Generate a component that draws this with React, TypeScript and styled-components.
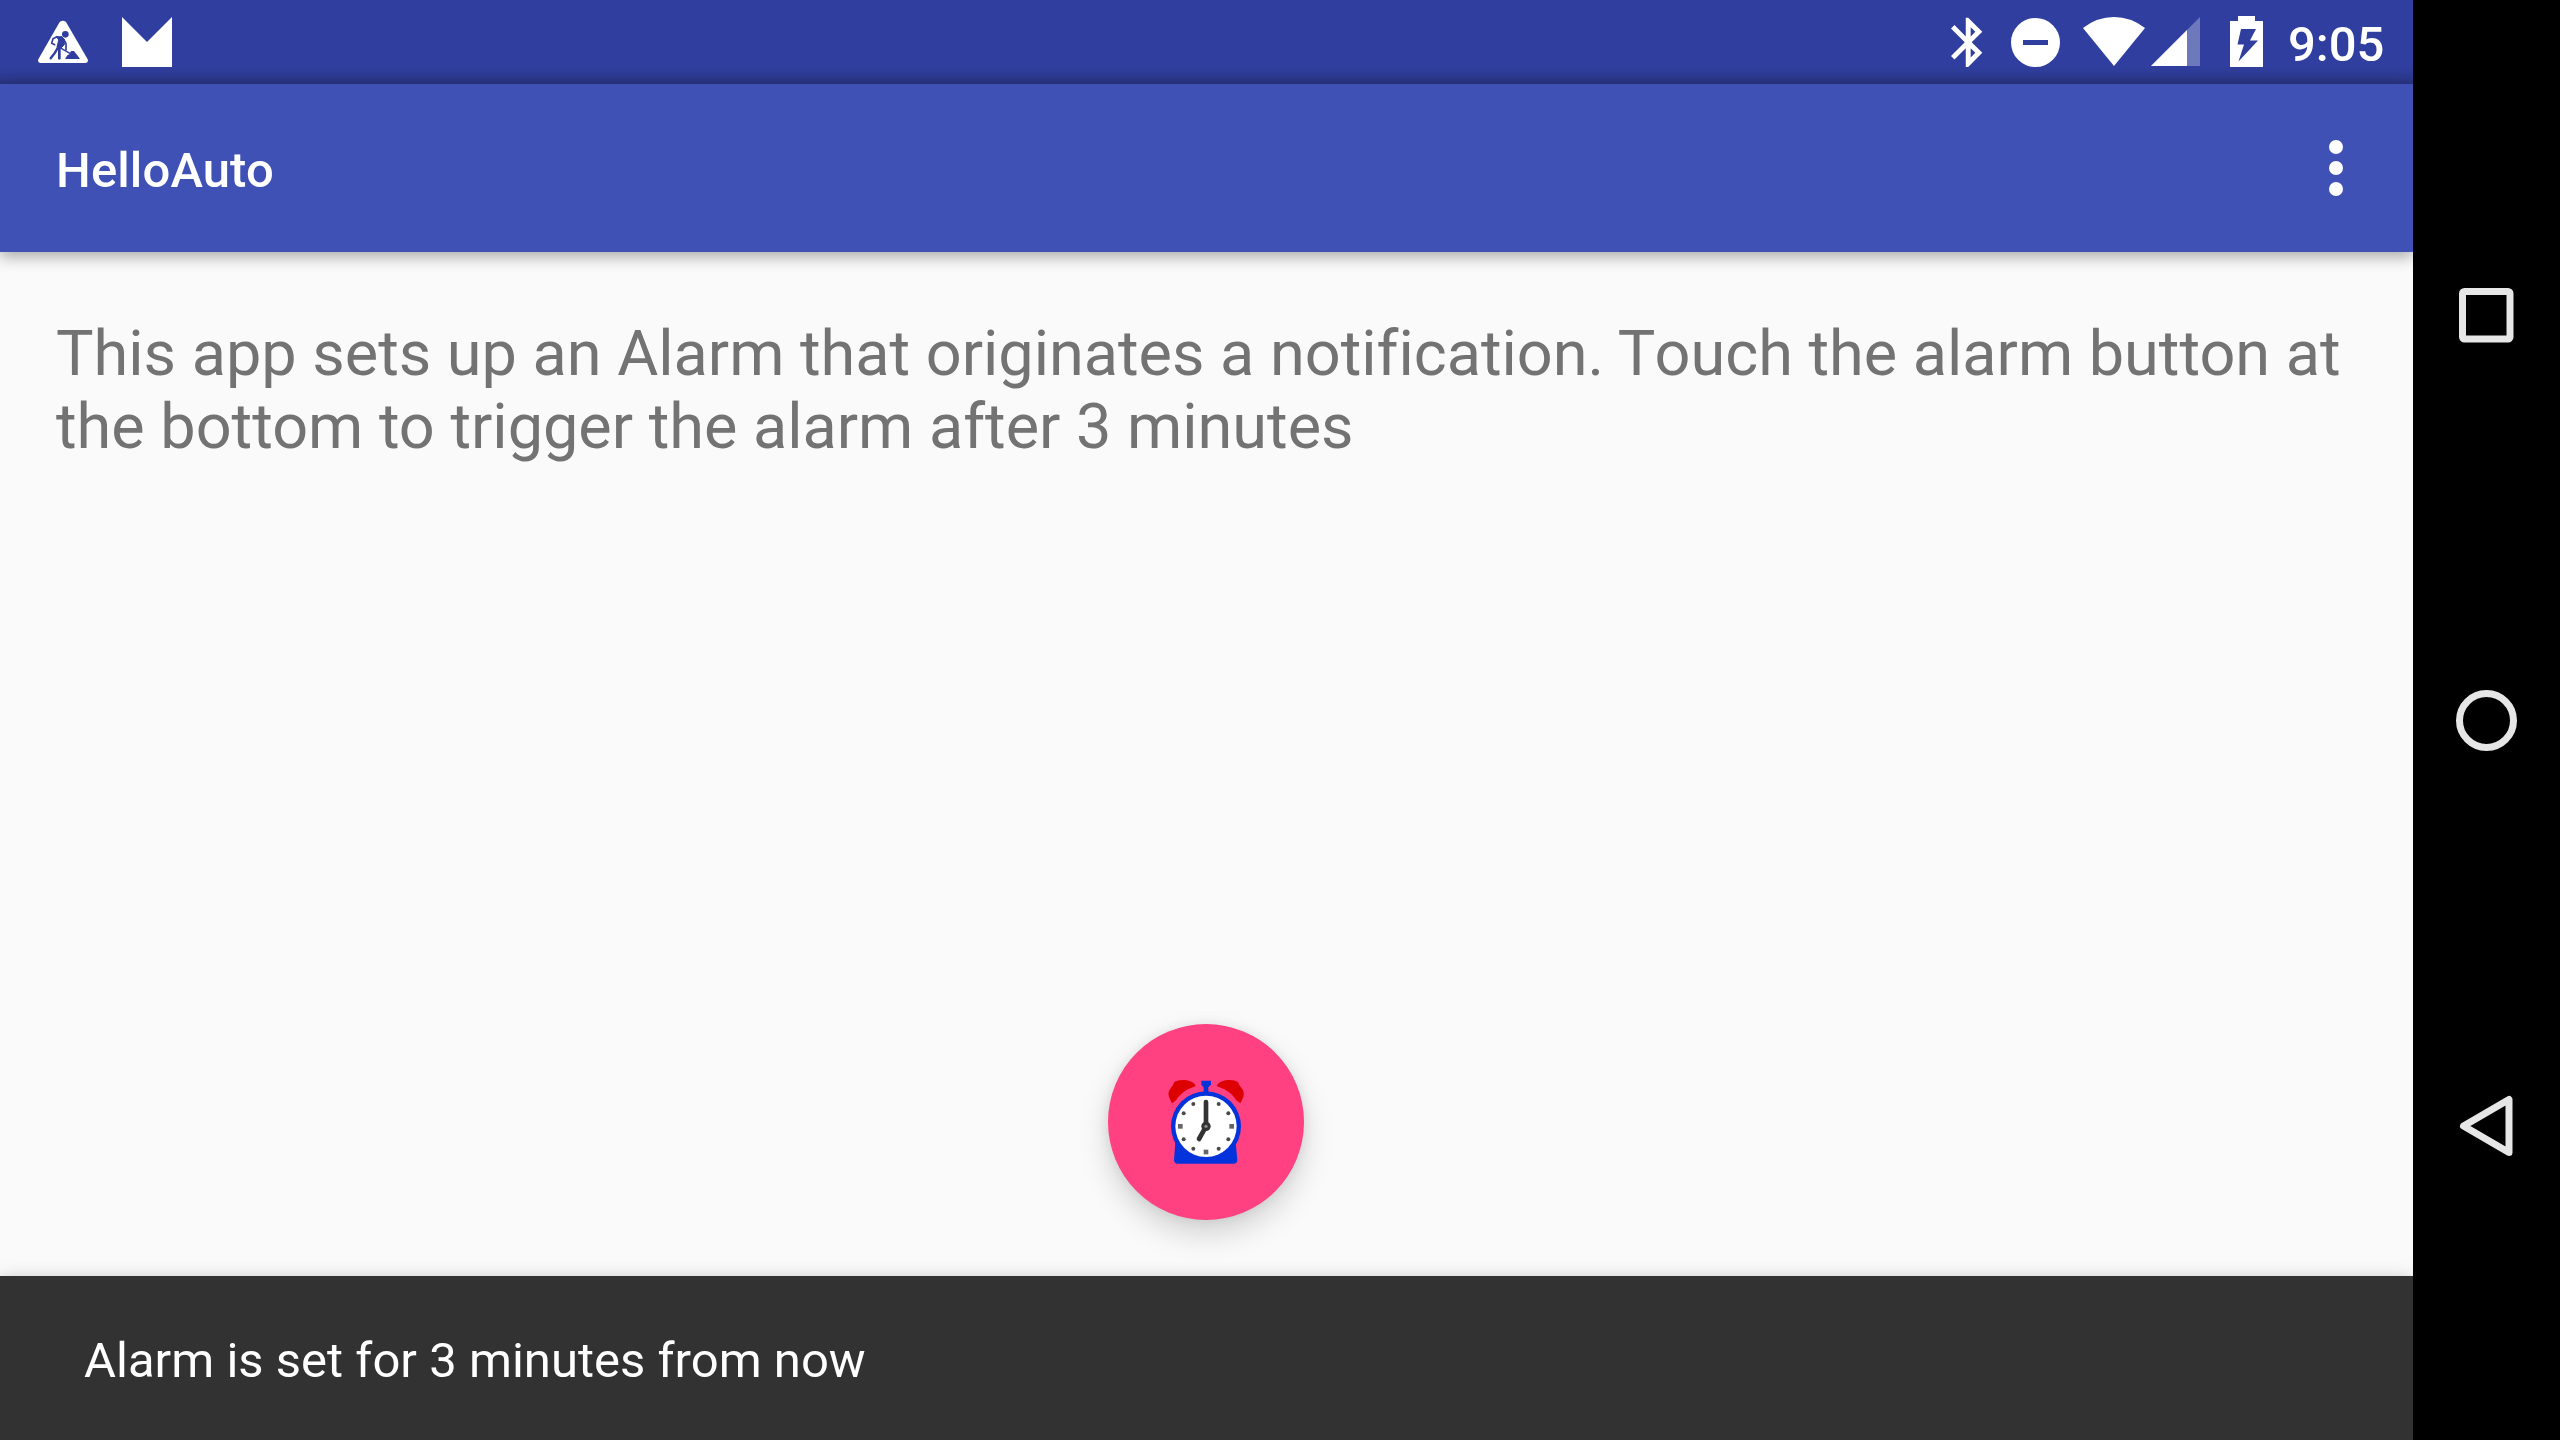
import React from 'react';
import styled, { createGlobalStyle } from 'styled-components';

const GlobalStyle = createGlobalStyle`
  html, body { margin: 0; padding: 0; background: #000; }
  * { box-sizing: border-box; }
`;

const Device = styled.div`
  display: flex;
  width: 2560px;
  height: 1440px;
  overflow: hidden;
  background: #000;
  font-family: Roboto, sans-serif;
`;

const Screen = styled.div`
  display: flex;
  flex-direction: column;
  width: 2413px;
  height: 1440px;
  overflow: hidden;
  background: #fafafa;
`;

const StatusBar = styled.header`
  flex: none;
  display: flex;
  justify-content: space-between;
  height: 84px;
  padding: 0 28px 0 38px;
  color: #fff;
  background: linear-gradient(to bottom, #303f9f 0, #303f9f 66px, #2e3b95 74px, #29347f 84px);
`;

const StatusGroup = styled.div`
  display: flex;
  align-items: flex-start;
`;

const StatusIcon = styled.svg<{ $gap?: number }>`
  flex: none;
  display: block;
  margin-right: ${(p) => p.$gap ?? 0}px;
`;

const Clock = styled.span`
  font-size: 49px;
  font-weight: 500;
  line-height: 57px;
  padding-top: 16px;
  width: 97px;
  white-space: nowrap;
`;

const Toolbar = styled.div`
  flex: none;
  z-index: 1;
  display: flex;
  align-items: center;
  justify-content: space-between;
  height: 168px;
  padding: 0 70px 0 56px;
  color: #fff;
  background: #3f51b5;
  box-shadow: 0 5px 14px rgba(0, 0, 0, 0.32);
`;

const Title = styled.h1`
  margin: 0;
  padding-top: 4px;
  font-size: 49px;
  font-weight: 500;
  line-height: 57px;
  letter-spacing: 0.12px;
`;

const MenuButton = styled.div`
  display: flex;
  flex-direction: column;
  gap: 7px;
`;

const Dot = styled.span`
  width: 14px;
  height: 14px;
  border-radius: 50%;
  background: #fff;
`;

const Content = styled.main`
  flex: 1;
  display: flex;
  flex-direction: column;
  justify-content: space-between;
  align-items: center;
  padding: 65px 57px 56px 56px;
`;

const Message = styled.p`
  margin: 0;
  align-self: flex-start;
  color: #737373;
  font-size: 63px;
  line-height: 73px;
  letter-spacing: -0.015px;
  white-space: nowrap;
`;

const KernedCap = styled.span`
  margin-left: -2px;
  letter-spacing: -0.8px;
`;

const Fab = styled.div`
  width: 196px;
  height: 196px;
  border-radius: 50%;
  background: #ff4081;
  box-shadow: 0 14px 30px rgba(0, 0, 0, 0.16), 0 0 12px rgba(0, 0, 0, 0.08);
`;

const Snackbar = styled.footer`
  flex: none;
  z-index: 1;
  display: flex;
  align-items: center;
  height: 164px;
  padding: 4px 84px 0;
  color: #fff;
  background: #323232;
  box-shadow: 0 3px 16px rgba(0, 0, 0, 0.25);
  font-size: 49px;
  line-height: 57px;
  letter-spacing: 0.02px;
`;

const NavBar = styled.nav`
  display: flex;
  flex-direction: column;
  align-items: center;
  justify-content: space-between;
  width: 147px;
  padding: 279px 0 278px;
`;

const NavIcon = styled.svg`
  display: block;
  fill: none;
  stroke: #e6e6e6;
  stroke-width: 7;
  stroke-linejoin: round;
`;

const ticks = [
  [130, 132], [206, 132], [101, 160], [235, 160],
  [101, 238], [235, 238], [130, 266], [206, 266],
];

const quarters = [[91, 199], [245, 199], [168, 276]];

function AlarmIcon() {
  return (
    <svg width="196" height="196" viewBox="-126 -108 588 588">
      <path d="M66 130 L57 112 Q53 96 61 86 Q70 77 73 66 Q84 60 97 60 Q117 58 133 71 L137 78 L114 88 Q91 100 78 121Z" fill="#dc0000" />
      <path d="M271 130 L280 112 Q284 96 276 86 Q267 77 264 66 Q253 60 240 60 Q220 58 204 71 L200 78 L223 88 Q246 100 259 121Z" fill="#dc0000" />
      <path d="M154 62 H183 V74 L175 82 V100 H161 V82 L154 74Z" fill="#0433dc" />
      <path d="M76 248 H257 L262 300 Q262 311 250 311 H84 Q72 311 72 300Z" fill="#0433dc" />
      <circle cx="168" cy="199" r="105" fill="#0433dc" />
      <circle cx="168" cy="199" r="92" fill="#fff" />
      {ticks.map(([x, y]) => (
        <circle key={`${x}-${y}`} cx={x} cy={y} r="6" fill="#4a4a4a" />
      ))}
      {quarters.map(([x, y]) => (
        <rect key={`${x}-${y}`} x={x - 7} y={y - 7} width="14" height="14" fill="#666" />
      ))}
      <path d="M168 126 V199 L147 237" fill="none" stroke="#333" strokeWidth="14" strokeLinecap="round" />
      <circle cx="168" cy="199" r="14" fill="#333" />
      <circle cx="168" cy="199" r="5" fill="#8a8a8a" />
    </svg>
  );
}

export default function App() {
  return (
    <Device>
      <GlobalStyle />
      <Screen>
        <StatusBar>
          <StatusGroup>
            <StatusIcon $gap={34} width="50" height="84" viewBox="0 0 150 252">
              <path d="M65 66 Q75 58 84 66 L149 178 Q152 188 143 189 H7 Q-2 188 1 178Z" fill="#fff" />
              <g stroke="#303f9f" fill="none" strokeLinecap="round" strokeLinejoin="round">
                <circle cx="82" cy="103" r="10" fill="#303f9f" stroke="none" />
                <path d="M56 110 L72 110 L79 119 L79 134 L67 146 L57 141 L62 121Z" fill="#303f9f" strokeWidth="3" />
                <path d="M57 110 L45 116 L41 130 L50 134" strokeWidth="5" />
                <path d="M60 142 L51 158 L38 175" strokeWidth="7" />
                <path d="M64 144 L64 175" strokeWidth="8" />
                <path d="M77 118 L84 130 L84 149" strokeWidth="5" />
                <path d="M66 143 L97 161" strokeWidth="4" />
              </g>
              <path d="M81 177 L88 166 L94 163 L99 153 H108 L113 160 L117 164 L126 177Z" fill="#303f9f" />
            </StatusIcon>
            <StatusIcon width="50" height="84" viewBox="0 0 50 84">
              <path d="M0 17 L25 42 L50 17 V67 H0Z" fill="#fff" />
            </StatusIcon>
          </StatusGroup>
          <StatusGroup>
            <StatusIcon $gap={28} width="32" height="84" viewBox="0 0 32 84">
              <path transform="translate(-12.3 12.8) scale(2.46)" fill="#fff" d="M17.71 7.71L12 2h-1v7.59L6.41 5 5 6.41 10.59 12 5 17.59 6.41 19 11 14.41V22h1l5.71-5.71-4.3-4.29 4.3-4.29zM13 5.83l1.88 1.88L13 9.59V5.83zm1.88 10.46L13 18.17v-3.76l1.88 1.88z" />
            </StatusIcon>
            <StatusIcon $gap={23} width="49" height="84" viewBox="0 0 49 84">
              <circle cx="24.500" cy="42.500" r="24.500" fill="#fff" />
              <rect x="12" y="40" width="25" height="5" fill="#303f9f" />
            </StatusIcon>
            <StatusIcon $gap={6} width="62" height="84" viewBox="0 0 62 84">
              <path d="M0 28 Q14 17 31 17 Q48 17 62 28 L31 66Z" fill="#fff" />
            </StatusIcon>
            <StatusIcon $gap={30} width="49" height="84" viewBox="0 0 49 84">
              <path d="M0 66 L49 17 V66Z" fill="#fff" fillOpacity="0.3" />
              <path d="M0 66 L36 30 V66Z" fill="#fff" />
            </StatusIcon>
            <StatusIcon $gap={25} width="33" height="84" viewBox="0 0 33 84">
              <path d="M8 16 H25 V21 H33 V67 H0 V21 H8Z" fill="#fff" />
              <path d="M11 29 H26 L20 40.500 H28 L8.500 61.500 L14 44.500 H7.500Z" fill="#303f9f" />
            </StatusIcon>
            <Clock>9:05</Clock>
          </StatusGroup>
        </StatusBar>
        <Toolbar>
          <Title>HelloAuto</Title>
          <MenuButton>
            <Dot />
            <Dot />
            <Dot />
          </MenuButton>
        </Toolbar>
        <Content>
          <Message>
            This app sets up an Alarm that originates a notification. <KernedCap>T</KernedCap>ouch the alarm button at
            <br />
            the bottom to trigger the alarm after 3 minutes
          </Message>
          <Fab>
            <AlarmIcon />
          </Fab>
        </Content>
        <Snackbar>Alarm is set for 3 minutes from now</Snackbar>
      </Screen>
      <NavBar>
        <NavIcon width="73" height="72" viewBox="0 0 73 72">
          <rect x="12.500" y="12.500" width="47.500" height="47.500" rx="2" />
        </NavIcon>
        <NavIcon width="73" height="72" viewBox="0 0 73 72">
          <circle cx="36.500" cy="35.500" r="27" />
        </NavIcon>
        <NavIcon width="73" height="72" viewBox="0 0 73 72">
          <path d="M13.500 36 L59 9.500 V62.500Z" />
        </NavIcon>
      </NavBar>
    </Device>
  );
}
